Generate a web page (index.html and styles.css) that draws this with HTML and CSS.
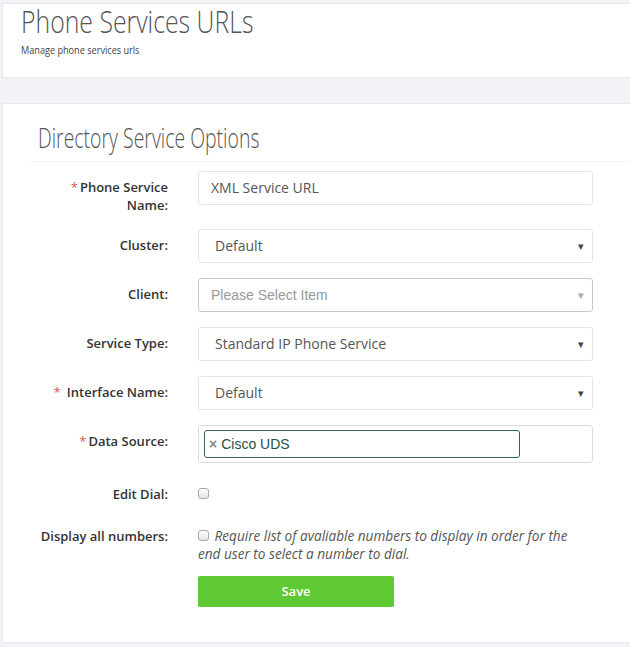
FILE: index.html
```html
<!DOCTYPE html>
<html>
<head>
<meta charset="utf-8">
<link rel="stylesheet" href="styles.css">
</head>
<body>
<div class="page">
  <div class="panel header">
    <h1 class="title">Phone Services URLs</h1>
    <p class="subtitle">Manage phone services urls</p>
  </div>
  <div class="panel main">
    <div class="section-head">
      <h2 class="section-title">Directory Service Options</h2>
    </div>
    <div class="form">
      <div class="row">
        <div class="lbl"><span class="req">*</span>Phone Service<br>Name:</div>
        <div class="ctl"><div class="input">XML Service URL</div></div>
      </div>
      <div class="row">
        <div class="lbl">Cluster:</div>
        <div class="ctl"><div class="input select"><span>Default</span><span class="caret">&#9662;</span></div></div>
      </div>
      <div class="row">
        <div class="lbl">Client:</div>
        <div class="ctl"><div class="input select2"><span>Please Select Item</span><span class="caret light">&#9662;</span></div></div>
      </div>
      <div class="row">
        <div class="lbl">Service Type:</div>
        <div class="ctl"><div class="input select"><span>Standard IP Phone Service</span><span class="caret">&#9662;</span></div></div>
      </div>
      <div class="row">
        <div class="lbl"><span class="req sp">*</span>Interface Name:</div>
        <div class="ctl"><div class="input select"><span>Default</span><span class="caret">&#9662;</span></div></div>
      </div>
      <div class="row">
        <div class="lbl"><span class="req">*</span>Data Source:</div>
        <div class="ctl"><div class="input multi"><span class="tag"><span class="x">&#215;</span>Cisco UDS</span></div></div>
      </div>
      <div class="row check-row">
        <div class="lbl">Edit Dial:</div>
        <div class="ctl"><span class="cb"></span></div>
      </div>
      <div class="row">
        <div class="lbl">Display all numbers:</div>
        <div class="ctl note"><span class="cb inline"></span> Require list of avaliable numbers to display in order for the end user to select a number to dial.</div>
      </div>
      <div class="row save-row">
        <div class="lbl"></div>
        <div class="ctl"><div class="btn">Save</div></div>
      </div>
    </div>
  </div>
</div>
</body>
</html>
```

FILE: styles.css
```css
html, body {
  margin: 0;
  padding: 0;
  background: #f1f3f6;
  font-family: "Open Sans", "Liberation Sans", sans-serif;
  color: #333;
}
.page {
  padding: 3px 0 0 2px;
}
.panel {
  background: #fff;
  border: 1px solid #e6e9ed;
  border-right: none;
}
.header {
  height: 73px;
  padding-left: 18px;
}
.title {
  margin: 0;
  padding-top: 1px;
  font-weight: 300;
  font-size: 31px;
  line-height: 32px;
  color: #555;
  transform: scaleX(0.8);
  transform-origin: 0 0;
  white-space: nowrap;
}
.subtitle {
  margin: 6px 0 0;
  font-size: 11px;
  line-height: 14px;
  color: #444;
  transform: scaleX(0.83);
  transform-origin: 0 0;
  white-space: nowrap;
}
.main {
  margin-top: 25px;
  padding-bottom: 35px;
}
.section-head {
  margin-left: 27px;
  border-bottom: 1px solid #f2f2f2;
  padding: 17px 0 6px 8px;
}
.section-title {
  margin: 0;
  font-weight: 300;
  font-size: 27px;
  line-height: 34px;
  color: #555;
  transform: scaleX(0.72);
  transform-origin: 0 0;
  white-space: nowrap;
}
.form {
  padding-top: 9px;
}
.row {
  display: flex;
  gap: 30px;
  margin-bottom: 15px;
}
.lbl {
  width: 165px;
  flex: none;
  text-align: right;
  font-size: 13px;
  font-weight: 600;
  line-height: 18px;
  padding-top: 7px;
  color: #333;
}
.req {
  color: #d9534f;
  font-weight: 400;
  margin-right: 2px;
}
.req.sp {
  margin-right: 6px;
}
.ctl {
  width: 395px;
  flex: none;
}
.input {
  box-sizing: border-box;
  height: 34px;
  border: 1px solid #e5e5e5;
  border-radius: 3px;
  padding: 0 12px;
  font-size: 14px;
  line-height: 32px;
  color: #555;
  display: flex;
  align-items: center;
}
.select {
  padding-left: 16px;
  font-size: 14px;
  justify-content: space-between;
  padding-right: 8px;
}
.caret {
  font-size: 11px;
  color: #444;
}
.caret.light {
  color: #aaa;
}
.select2 {
  border-color: #c8c8c8;
  font-family: "Liberation Sans", Arial, sans-serif;
  font-size: 14px;
  color: #999;
  justify-content: space-between;
  padding-right: 8px;
}
.multi {
  height: 38px;
  padding: 0 5px;
  border-color: #dcdcdc;
}
.tag {
  box-sizing: border-box;
  width: 316px;
  height: 28px;
  border: 1px solid #2f6652;
  border-radius: 3px;
  font-family: "Liberation Sans", Arial, sans-serif;
  font-size: 14px;
  line-height: 26px;
  color: #2a4f40;
  padding-left: 4px;
}
.x {
  color: #888;
  font-weight: 700;
  margin-right: 4px;
}
.check-row .ctl {
  padding-top: 4px;
  height: 23px;
}
.cb {
  display: inline-block;
  box-sizing: border-box;
  width: 11px;
  height: 11px;
  border: 1px solid #aaa;
  border-radius: 3px;
  background: linear-gradient(#fff, #e4e4e4);
}
.cb.inline {
  vertical-align: 0;
  margin-right: 2px;
}
.note {
  padding-top: 7px;
  font-size: 13.6px;
  line-height: 18px;
  font-style: italic;
  color: #555;
}
.save-row {
  margin-top: -2px;
  margin-bottom: 0;
}
.btn {
  width: 196px;
  height: 31px;
  background: #5fc933;
  border-radius: 2px;
  color: #fff;
  font-size: 13px;
  font-weight: 600;
  line-height: 31px;
  text-align: center;
}
```
